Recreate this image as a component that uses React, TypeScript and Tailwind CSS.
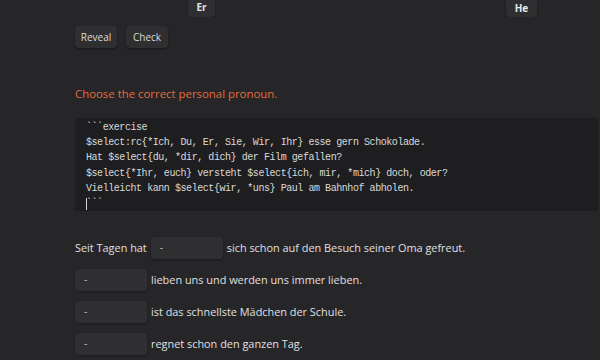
import React from "react";

const sans = { fontFamily: '"Open Sans", "Noto Sans", sans-serif' };

function Sel({ w = "w-[72px]" }: { w?: string }) {
  return (
    <div className={`${w} h-[22px] rounded-[4px] bg-[#2f2e31] shadow-[0_1px_2px_rgba(0,0,0,0.35)] flex items-center pl-[9px] text-[10.5px] text-[#bdbdbd] shrink-0`}>
      -
    </div>
  );
}

export default function App() {
  const code = [
    "```exercise",
    "$select:rc{*Ich, Du, Er, Sie, Wir, Ihr} esse gern Schokolade.",
    "Hat $select{du, *dir, dich} der Film gefallen?",
    "$select{*Ihr, euch} versteht $select{ich, mir, *mich} doch, oder?",
    "Vielleicht kann $select{wir, *uns} Paul am Bahnhof abholen.",
  ];
  return (
    <div className="w-[600px] h-[360px] overflow-hidden bg-[#262528] text-[#e0e0e0]" style={sans}>
      <div className="h-[17px] flex items-end overflow-hidden">
        <div className="ml-[188px] w-[27px] h-[24px] rounded-[4px] bg-[#2f2e31] shadow-[0_1px_2px_rgba(0,0,0,0.4)] flex items-center justify-center text-[10px] font-bold text-[#e8e8e8] pt-[4px]">
          Er
        </div>
        <div className="ml-auto mr-[63px] w-[31px] h-[24px] rounded-[4px] bg-[#2f2e31] shadow-[0_1px_2px_rgba(0,0,0,0.4)] flex items-center justify-center text-[10px] font-bold text-[#e8e8e8] pt-[6px]">
          He
        </div>
      </div>
      <div className="flex gap-[9px] pl-[75px] mt-[9px]">
        <div className="w-[42px] h-[22px] rounded-[4px] bg-[#2f2e31] shadow-[0_1px_2px_rgba(0,0,0,0.4)] flex items-center justify-center text-[10px] text-[#dcdcdc]">
          Reveal
        </div>
        <div className="w-[42px] h-[22px] rounded-[4px] bg-[#2f2e31] shadow-[0_1px_2px_rgba(0,0,0,0.4)] flex items-center justify-center text-[10px] text-[#dcdcdc]">
          Check
        </div>
      </div>
      <div className="pl-[75px] mt-[38px] text-[11.4px] leading-[16px] text-[#e36e3c]">
        Choose the correct personal pronoun.
      </div>
      <div
        className="ml-[75px] mr-[2px] mt-[16px] h-[93px] bg-[#1e1e20] pl-[11px] pt-[2px] text-[10px] leading-[15.2px] text-[#dadada] tracking-[-0.44px]"
        style={{ fontFamily: '"Liberation Mono", monospace' }}
      >
        {code.map((l, i) => (
          <div key={i} className="whitespace-pre">{l}</div>
        ))}
        <div className="flex items-center whitespace-pre">
          <span className="w-[1px] h-[12px] bg-[#d4d4d4] mr-[-1px]" />
          ```
        </div>
      </div>
      <div className="pl-[75px] mt-[26px] flex flex-col gap-[10px] text-[10.9px]">
        <div className="flex items-center gap-[4px]">
          <span>Seit Tagen hat</span>
          <Sel />
          <span>sich schon auf den Besuch seiner Oma gefreut.</span>
        </div>
        <div className="flex items-center gap-[4px]">
          <Sel />
          <span>lieben uns und werden uns immer lieben.</span>
        </div>
        <div className="flex items-center gap-[4px]">
          <Sel />
          <span>ist das schnellste Mädchen der Schule.</span>
        </div>
        <div className="flex items-center gap-[4px]">
          <Sel />
          <span>regnet schon den ganzen Tag.</span>
        </div>
      </div>
    </div>
  );
}
